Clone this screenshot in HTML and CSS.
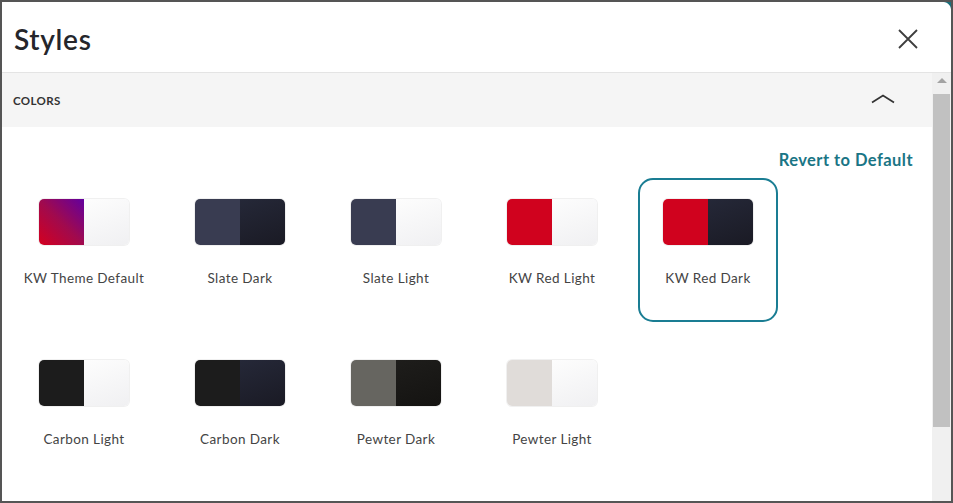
FILE: index.html
```html
<!DOCTYPE html>
<html>
<head>
<meta charset="utf-8">
<link rel="stylesheet" href="styles.css">
</head>
<body>
<div class="window">
  <span class="corner"></span>
  <header class="header">
    <h1 class="title">Styles</h1>
    <button class="close" aria-label="Close">
      <svg width="20" height="20" viewBox="0 0 20 20"><path d="M1 1L19 19M19 1L1 19" stroke="#3d3d3d" stroke-width="1.8" fill="none"/></svg>
    </button>
  </header>
  <div class="body">
    <div class="main">
      <div class="section-head">
        <span class="section-title">COLORS</span>
        <svg class="chev" width="24" height="10" viewBox="0 0 24 10"><path d="M1 8.5L12 1.5L23 8.5" stroke="#333" stroke-width="1.7" fill="none"/></svg>
      </div>
      <div class="content">
        <div class="revert-row"><a class="revert">Revert to Default</a></div>
        <div class="grid">
          <div class="card"><div class="swatch"><span class="l kwdef"></span><span class="r light"></span></div><div class="label">KW Theme Default</div></div>
          <div class="card"><div class="swatch"><span class="l slate"></span><span class="r dark"></span></div><div class="label">Slate Dark</div></div>
          <div class="card"><div class="swatch"><span class="l slate"></span><span class="r light"></span></div><div class="label">Slate Light</div></div>
          <div class="card"><div class="swatch"><span class="l red"></span><span class="r light"></span></div><div class="label">KW Red Light</div></div>
          <div class="card selected"><div class="swatch"><span class="l red"></span><span class="r dark"></span></div><div class="label">KW Red Dark</div></div>
          <div class="card"><div class="swatch"><span class="l carbon"></span><span class="r light"></span></div><div class="label">Carbon Light</div></div>
          <div class="card"><div class="swatch"><span class="l carbon"></span><span class="r dark"></span></div><div class="label">Carbon Dark</div></div>
          <div class="card"><div class="swatch"><span class="l pewter"></span><span class="r pdark"></span></div><div class="label">Pewter Dark</div></div>
          <div class="card"><div class="swatch"><span class="l pewterl"></span><span class="r light"></span></div><div class="label">Pewter Light</div></div>
        </div>
      </div>
    </div>
    <div class="scrollbar">
      <div class="arrow"></div>
      <div class="thumb"></div>
    </div>
  </div>
</div>
</body>
</html>
```
FILE: styles.css
```css
* { box-sizing: border-box; }
html, body { margin: 0; padding: 0; background: #fff; }
body { font-family: "Lato", "Noto Sans", sans-serif; }
.window {
  position: relative;
  width: 953px;
  height: 503px;
  border: 2px solid #555;
  display: flex;
  flex-direction: column;
  overflow: hidden;
  background: #fff;
}
.corner {
  position: absolute;
  right: 0;
  top: 0;
  width: 8px;
  height: 8px;
  background: radial-gradient(circle at 0 100%, transparent 7.5px, #1c6f7c 8.5px);
}
.header {
  height: 71px;
  flex: none;
  display: flex;
  align-items: center;
  justify-content: space-between;
  padding: 4px 33px 0 12px;
  border-bottom: 1px solid #e4e4e4;
}
.title {
  margin: 0;
  font-size: 28px;
  font-weight: 600;
  color: #25262b;
  letter-spacing: 0.7px;
}
.close {
  border: 0;
  background: none;
  padding: 0;
  width: 20px;
  height: 20px;
  display: flex;
}
.body {
  flex: 1;
  display: flex;
  min-height: 0;
}
.main {
  flex: 1;
  display: flex;
  flex-direction: column;
}
.section-head {
  height: 54px;
  flex: none;
  background: #f5f5f5;
  display: flex;
  align-items: center;
  justify-content: space-between;
  padding: 0 37px 0 11px;
}
.section-title {
  font-size: 11.5px;
  font-weight: 700;
  color: #333;
  letter-spacing: 0.4px;
}
.chev { margin-top: -2px; }
.content {
  padding: 23px 19px 0 12px;
}
.revert-row {
  display: flex;
  justify-content: flex-end;
  height: 20px;
  margin-bottom: 8px;
}
.revert {
  font-size: 16.5px;
  font-weight: 700;
  color: #1a7585;
  line-height: 20px;
  letter-spacing: 0.45px;
}
.grid {
  display: grid;
  grid-template-columns: repeat(5, 140px);
  grid-auto-rows: 144px;
  column-gap: 16px;
  row-gap: 17px;
}
.card {
  border: 2px solid transparent;
  border-radius: 15px;
  padding-top: 19px;
  display: flex;
  flex-direction: column;
  align-items: center;
}
.card.selected { border-color: #1a7d93; }
.swatch {
  width: 90px;
  height: 46px;
  border-radius: 5px;
  overflow: hidden;
  display: flex;
  box-shadow: 0 0 0 1px rgba(0,0,0,0.06);
}
.swatch span { flex: 1; }
.l.kwdef { background: linear-gradient(45deg, #d4001f 0%, #a00a4e 50%, #62009f 100%); }
.l.slate { background: #393c51; }
.l.red { background: #d0021e; }
.l.carbon { background: #1c1c1c; }
.l.pewter { background: #666560; }
.l.pewterl { background: #e0dcd9; }
.r.light { background: linear-gradient(160deg, #fdfdfd 0%, #f0f0f2 100%); }
.r.dark { background: linear-gradient(160deg, #252838 0%, #1a1a24 100%); }
.r.pdark { background: linear-gradient(160deg, #1e1d1b 0%, #141311 100%); }
.label {
  margin-top: 24px;
  font-size: 13.5px;
  line-height: 18px;
  color: #444;
  letter-spacing: 0.4px;
}
.scrollbar {
  width: 19px;
  flex: none;
  background: #f0f0f0;
  padding: 0 1px 0 1px;
  display: flex;
  flex-direction: column;
  align-items: center;
}
.arrow {
  margin-top: 5px;
  width: 0;
  height: 0;
  border-left: 5px solid transparent;
  border-right: 5px solid transparent;
  border-bottom: 5px solid #a3a3a3;
}
.thumb {
  margin-top: 11px;
  width: 17px;
  height: 333px;
  background: #c1c1c1;
}
```
